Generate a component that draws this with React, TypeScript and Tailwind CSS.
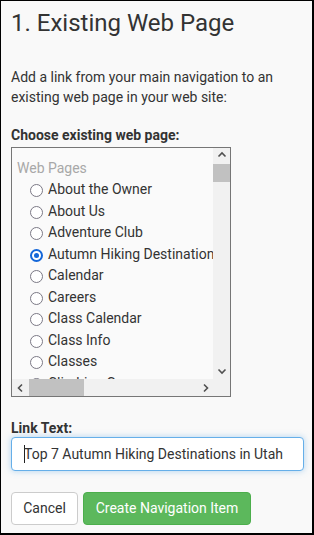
import React from "react";

const pages = [
  "About the Owner",
  "About Us",
  "Adventure Club",
  "Autumn Hiking Destinations",
  "Calendar",
  "Careers",
  "Class Calendar",
  "Class Info",
  "Classes",
  "Climbing Gym",
  "Contact Us",
];

function Chevron({ dir }: { dir: "up" | "down" | "left" | "right" }) {
  const d = {
    up: "M1.5 5.5 L5 2 L8.5 5.5",
    down: "M1.5 3.5 L5 7 L8.5 3.5",
    left: "M6 1.5 L2.5 5 L6 8.5",
    right: "M4 1.5 L7.5 5 L4 8.5",
  }[dir];
  return (
    <svg width="10" height="10" viewBox="0 0 10 10" className="block">
      <path d={d} fill="none" stroke="#505050" strokeWidth="1.6" />
    </svg>
  );
}

function Radio({ checked }: { checked?: boolean }) {
  if (checked) {
    return (
      <span className="mt-[2px] flex h-[13px] w-[13px] shrink-0 items-center justify-center rounded-full border-2 border-[#1467d9] bg-white">
        <span className="block h-[5px] w-[5px] rounded-full bg-[#1467d9]" />
      </span>
    );
  }
  return (
    <span className="mt-[2px] block h-[13px] w-[13px] shrink-0 rounded-full border-[1.5px] border-[#7b7985] bg-white" />
  );
}

export default function App() {
  return (
    <div
      className="h-[535px] w-[314px] overflow-hidden border-t border-l border-r-2 border-b-2 border-black bg-[#f9f9f9] pl-[10px] pt-[8px] text-[#333]"
      style={{ fontFamily: "Roboto, 'Liberation Sans', sans-serif" }}
    >
      <h1 className="text-[24px] leading-[28px] font-normal">
        1. Existing Web Page
      </h1>
      <p className="mt-[30px] text-[14px] leading-[20px]">
        Add a link from your main navigation to an existing web page in your
        web site:
      </p>

      <div className="mt-[18px] text-[14px] leading-[20px] font-bold">
        Choose existing web page:
      </div>
      <div className="mt-[2px] flex h-[250px] w-[220px] flex-col border border-[#767676] bg-[#fafafa]">
        <div className="flex min-h-0 flex-1">
          <div className="min-w-0 flex-1 overflow-hidden pl-[5px] pt-[9.5px] text-[14px] leading-[21.5px]">
            <div className="text-[#a8a8a8]">Web Pages</div>
            {pages.map((p) => (
              <div
                key={p}
                className="flex h-[21.5px] items-center gap-[5px] whitespace-nowrap pl-[13px]"
              >
                <Radio checked={p === "Autumn Hiking Destinations"} />
                <span>{p}</span>
              </div>
            ))}
          </div>
          <div className="flex w-[17px] flex-col bg-[#f1f1f1]">
            <div className="flex h-[16px] items-center justify-center">
              <Chevron dir="up" />
            </div>
            <div className="h-[18px] bg-[#c1c1c1]" />
            <div className="flex-1" />
            <div className="flex h-[17px] items-center justify-center">
              <Chevron dir="down" />
            </div>
          </div>
        </div>
        <div className="flex h-[17px] bg-[#f1f1f1]">
          <div className="flex w-[17px] items-center justify-center">
            <Chevron dir="left" />
          </div>
          <div className="w-[55px] bg-[#c1c1c1]" />
          <div className="flex-1" />
          <div className="flex w-[17px] items-center justify-center">
            <Chevron dir="right" />
          </div>
          <div className="w-[17px] bg-[#f1f1f1]" />
        </div>
      </div>

      <div className="mt-[22px] text-[14px] leading-[18px] font-bold">
        Link Text:
      </div>
      <div className="flex h-[34px] w-[293px] items-center rounded-[4px] border border-[#66afe9] bg-white pl-[12px] text-[14px] shadow-[0_0_6px_rgba(102,175,233,0.5)]">
        <span className="mr-[-1px] h-[18px] w-px bg-[#222]" />
        <span>Top 7 Autumn Hiking Destinations in Utah</span>
      </div>

      <div className="mt-[21px] flex gap-[5px] text-[14px]">
        <button className="h-[33px] w-[67px] rounded-[4px] border border-[#ccc] bg-white text-[#333]">
          Cancel
        </button>
        <button className="h-[33px] w-[168px] rounded-[4px] border border-[#4cae4c] bg-[#5cb85c] text-white">
          Create Navigation Item
        </button>
      </div>
    </div>
  );
}
